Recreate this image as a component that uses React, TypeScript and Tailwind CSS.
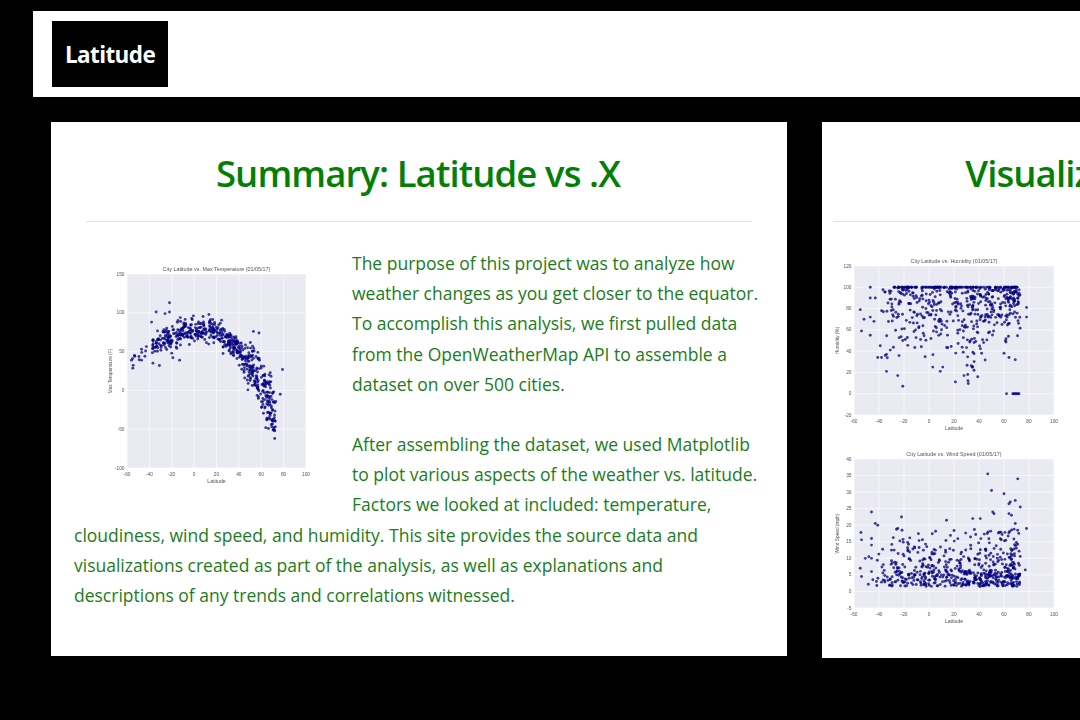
import React from 'react';

type Pt = [number, number];

// small seeded generator so the scatter stays the same between runs
const makeRand = (seed: number) => () => {
  seed = (seed * 16807) % 2147483647;
  return (seed - 1) / 2147483646;
};

const gauss = (r: () => number) => (r() + r() + r() + r() - 2) / 2;

const latitude = (r: () => number) => {
  const v = r();
  if (v < 0.1) return -55 + r() * 25;
  if (v < 0.3) return -30 + r() * 30;
  if (v < 0.52) return r() * 30;
  if (v < 0.82) return 30 + r() * 30;
  return 60 + r() * 13;
};

const tempData = (): Pt[] => {
  const r = makeRand(11);
  const pts: Pt[] = [];
  for (let i = 0; i < 620; i++) {
    const lat = latitude(r);
    if (lat < -38 && r() < 0.75) continue;
    const base = lat < 5 ? 79 - ((lat - 5) * (lat - 5)) / 75 : 79 - ((lat - 5) * (lat - 5)) / 42;
    pts.push([lat, base + gauss(r) * (lat > 45 ? 58 : 28)]);
  }
  return pts.concat([
    [-56, 39], [-55, 41], [-53, 44], [-47, 39], [-47, 53], [-44, 44], [-31, 32], [-22, 113], [-22, 101],
    [-26, 99], [-34, 101], [-38, 88], [-19, 42], [-20, 48], [-13, 39], [53, 76], [58, 74], [57, 49],
    [79, 27], [77, -5], [72, -62], [71, -50], [64, -48], [65, -38], [72, -52], [69, -44], [68, -30],
  ]);
};

const humidityData = (): Pt[] => {
  const r = makeRand(29);
  const pts: Pt[] = [];
  for (let i = 0; i < 110; i++) pts.push([-28 + r() * 100, 100]);
  for (let i = 0; i < 480; i++) {
    const lat = latitude(r);
    if (lat < -38) continue;
    const spread = lat > 45 ? 70 : lat > 20 ? 110 : 95;
    pts.push([lat, 100 - Math.abs(gauss(r)) * spread]);
  }
  return pts.concat([
    [-55, 79], [-52, 70], [-54, 59], [-47, 100], [-47, 90], [-47, 72], [-47, 55], [-43, 90], [-44, 68],
    [-39, 45], [-41, 34], [-38, 34], [-35, 36], [-34, 37], [-31, 41], [-34, 21], [-25, 17], [-21, 7],
    [-21, 50], [-19, 51], [3, 25], [9, 21], [11, 25], [28, 17], [31, 18], [36, 22], [60, 38], [64, 34],
    [69, 32], [78, 81], [78, 72], [62, 0], [67, 0], [68, 0], [69, 0], [70, 0], [71, 0], [72, 0],
  ]);
};

const windData = (): Pt[] => {
  const r = makeRand(47);
  const pts: Pt[] = [];
  for (let i = 0; i < 600; i++) {
    const lat = latitude(r);
    if (lat < -38 && r() < 0.7) continue;
    const v = r();
    const speed = v < 0.62 ? 1.5 + r() * 5 : v < 0.88 ? 6 + r() * 7 : 12 + r() * 7;
    pts.push([lat, speed]);
  }
  return pts.concat([
    [-55, 7], [-54, 4.5], [-51, 10], [-46, 24], [-46, 16], [-46, 14], [-46, 10], [-46, 6], [-42, 3],
    [-43, 20.5], [-41, 20], [-22, 22.5], [-25, 19], [14, 21.5], [35, 22], [41, 22], [47, 35.5], [50, 30.5],
    [51, 24], [52, 23.5], [60, 29.5], [71, 34], [69, 27.5], [65, 27], [64, 26.5], [73, 25.5], [64, 23.5],
    [66, 23], [69, 20.5], [78, 19], [77, 6.5],
  ]);
};

type ChartProps = {
  width: number;
  height: number;
  plot: { left: number; top: number; right: number; bottom: number };
  yMin: number;
  yMax: number;
  yStep: number;
  title: string;
  yLabel: string;
  data: Pt[];
};

const Chart = ({ width, height, plot, yMin, yMax, yStep, title, yLabel, data }: ChartProps) => {
  const sx = (v: number) => plot.left + ((v + 60) / 160) * (plot.right - plot.left);
  const sy = (v: number) => plot.bottom - ((v - yMin) / (yMax - yMin)) * (plot.bottom - plot.top);
  const xTicks = [-60, -40, -20, 0, 20, 40, 60, 80, 100];
  const yTicks: number[] = [];
  for (let v = yMin; v <= yMax; v += yStep) yTicks.push(v);
  const midX = (plot.left + plot.right) / 2;
  const midY = (plot.top + plot.bottom) / 2;

  return (
    <svg width={width} height={height} className="block blur-[0.6px]" fontFamily="'Liberation Sans', sans-serif">
      <rect x={plot.left} y={plot.top} width={plot.right - plot.left} height={plot.bottom - plot.top} fill="#eaeaf2" />
      {xTicks.map((t) => (
        <line key={t} x1={sx(t)} x2={sx(t)} y1={plot.top} y2={plot.bottom} stroke="#ffffff" strokeWidth="0.6" />
      ))}
      {yTicks.map((t) => (
        <line key={t} x1={plot.left} x2={plot.right} y1={sy(t)} y2={sy(t)} stroke="#ffffff" strokeWidth="0.6" />
      ))}
      {data.map(([x, y], i) => (
        <circle key={i} cx={sx(x)} cy={sy(y)} r="1.45" fill="#00007f" fillOpacity="0.75" />
      ))}
      <g fontSize="4.8" fill="#555555">
        {xTicks.map((t) => (
          <text key={t} x={sx(t)} y={plot.bottom + 8} textAnchor="middle">{t}</text>
        ))}
        {yTicks.map((t) => (
          <text key={t} x={plot.left - 2.5} y={sy(t) + 1.6} textAnchor="end">{t}</text>
        ))}
        <text x={midX} y={plot.bottom + 15} textAnchor="middle" fontSize="5.2">Latitude</text>
        <text x={plot.left - 15} y={midY} textAnchor="middle" fontSize="4.8" transform={`rotate(-90 ${plot.left - 15} ${midY})`}>{yLabel}</text>
      </g>
      <text x={midX} y={plot.top - 3} textAnchor="middle" fontSize="5.4" fill="#555555">{title}</text>
    </svg>
  );
};

const temperature = tempData();
const humidity = humidityData();
const wind = windData();

export default function App() {
  return (
    <div className="h-[720px] w-[1080px] overflow-hidden bg-black font-['Open_Sans','Noto_Sans',sans-serif]">
      <nav className="ml-[33px] mt-[11px] flex h-[86px] w-[1200px] items-center bg-white pl-[19px]">
        <a className="flex h-[66px] w-[116px] items-center justify-center bg-black pt-[2px] text-[22.5px] font-bold tracking-[-0.6px] text-white">
          Latitude
        </a>
      </nav>

      <div className="ml-[51px] mt-[25px] flex w-[1400px] items-start gap-[35px]">
        <section className="h-[534px] w-[736px] shrink-0 bg-white pl-[23px] pr-[25px] pt-[27px]">
          <h1 className="text-center text-[36.5px] leading-[48px] font-semibold tracking-[-0.9px] text-[#037f03]">
            Summary: Latitude vs .X
          </h1>
          <hr className="ml-[12px] mr-[10px] mt-[24px] border-[#e3e3e3]" />
          <div className="mt-[26px] text-[17.5px] leading-[30.2px] text-[#1b7c1b]">
            <div className="float-left mr-[18px] h-[249px] w-[260px]">
              <Chart
                width={245}
                height={245}
                plot={{ left: 53, top: 26, right: 232, bottom: 220 }}
                yMin={-100}
                yMax={150}
                yStep={50}
                title="City Latitude vs. Max Temperature (01/05/17)"
                yLabel="Max Temperature (F)"
                data={temperature}
              />
            </div>
            <p>
              The purpose of this project was to analyze how weather changes as you get closer to the equator. To
              accomplish this analysis, we first pulled data from the OpenWeatherMap API to assemble a dataset on
              over 500 cities.
            </p>
            <p className="mt-[30px]">
              After assembling the dataset, we used Matplotlib to plot various aspects of the weather vs. latitude.
              Factors we looked at included: temperature, cloudiness, wind speed, and humidity. This site provides
              the source data and visualizations created as part of the analysis, as well as explanations and
              descriptions of any trends and correlations witnessed.
            </p>
          </div>
        </section>

        <section className="h-[536px] w-[516px] shrink-0 bg-white px-[11px] pt-[27px]">
          <h2 className="text-center text-[36.5px] leading-[48px] font-semibold tracking-[-0.9px] text-[#037f03]">
            Visualizations
          </h2>
          <hr className="mt-[24px] border-[#e3e3e3]" />
          <div className="mt-[32px] flex flex-col gap-[2px]">
            <Chart
              width={247}
              height={190}
              plot={{ left: 21, top: 12, right: 221, bottom: 161 }}
              yMin={-20}
              yMax={120}
              yStep={20}
              title="City Latitude vs. Humidity (01/05/17)"
              yLabel="Humidity (%)"
              data={humidity}
            />
            <Chart
              width={247}
              height={190}
              plot={{ left: 21, top: 13, right: 221, bottom: 162 }}
              yMin={-5}
              yMax={40}
              yStep={5}
              title="City Latitude vs. Wind Speed (01/05/17)"
              yLabel="Wind Speed (mph)"
              data={wind}
            />
          </div>
        </section>
      </div>
    </div>
  );
}
